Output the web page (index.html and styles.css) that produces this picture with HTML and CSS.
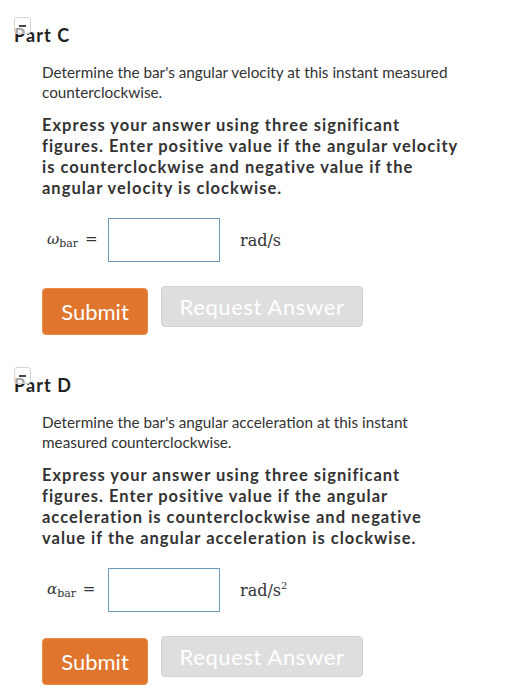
FILE: index.html
```html
<!DOCTYPE html>
<html lang="en">
<head>
    <meta charset="UTF-8">
    <meta name="viewport" content="width=device-width, initial-scale=1.0">
    <title>Part C and D</title>
    <link rel="stylesheet" href="styles.css">
</head>
<body>
    <div class="part">
        <h2 class="part-title"><span class="toggle"></span>Part C</h2>
        <div class="part-body">
            <p class="question">Determine the bar's angular velocity at this instant measured counterclockwise.</p>
            <p class="instructions">Express your answer using three significant figures. Enter positive value if the angular velocity is counterclockwise and negative value if the angular velocity is clockwise.</p>
            <div class="answer-row">
                <span class="math"><i>ω</i><sub>bar</sub> <span class="eq">=</span></span>
                <input class="answer" type="text">
                <span class="unit">rad/s</span>
            </div>
            <div class="button-row">
                <button class="btn submit">Submit</button>
                <button class="btn request" disabled>Request Answer</button>
            </div>
        </div>
    </div>

    <div class="part">
        <h2 class="part-title"><span class="toggle"></span>Part D</h2>
        <div class="part-body">
            <p class="question">Determine the bar's angular acceleration at this instant measured counterclockwise.</p>
            <p class="instructions">Express your answer using three significant figures. Enter positive value if the angular acceleration is counterclockwise and negative value if the angular acceleration is clockwise.</p>
            <div class="answer-row">
                <span class="math"><i>α</i><sub>bar</sub> <span class="eq">=</span></span>
                <input class="answer" type="text">
                <span class="unit">rad/s<sup>2</sup></span>
            </div>
            <div class="button-row">
                <button class="btn submit">Submit</button>
                <button class="btn request" disabled>Request Answer</button>
            </div>
        </div>
    </div>
</body>
</html>
```

FILE: styles.css
```css
* {
    margin: 0;
    padding: 0;
    box-sizing: border-box;
}

body {
    background: #fff;
    color: #333;
    font-family: Lato, 'Open Sans', sans-serif;
}

.part {
    height: 350px;
    padding: 23px 0 0 14px;
}

.part-title {
    position: relative;
    font-size: 18px;
    line-height: 24px;
    font-weight: 700;
    letter-spacing: 1.1px;
    color: #222;
}

/* collapse toggle sits over the heading */
.toggle {
    position: absolute;
    left: 0;
    top: -6px;
    width: 17px;
    height: 17px;
    border: 1px solid #d4d4d4;
    border-radius: 3px;
    background: rgba(255, 255, 255, 0.6);
}

.toggle::after {
    content: '';
    position: absolute;
    left: 4px;
    top: 7px;
    width: 7px;
    height: 2px;
    background: #444;
}

.part-body {
    padding-left: 28px;
    width: 480px;
}

.question {
    margin-top: 15px;
    font-size: 15.3px;
    line-height: 20px;
    width: 420px;
}

.instructions {
    margin-top: 13px;
    font-size: 16.5px;
    line-height: 21px;
    font-weight: 700;
    letter-spacing: 1px;
    width: 421px;
}

.answer-row {
    display: flex;
    align-items: center;
    margin-top: 19px;
    font-family: 'DejaVu Serif', 'Liberation Serif', serif;
}

.math {
    width: 66px;
    padding-left: 5px;
    font-size: 15px;
}

.math sub {
    font-size: 11px;
    vertical-align: -3px;
}

.math .eq {
    margin-left: 2px;
}

.answer {
    width: 112px;
    height: 44px;
    border: 1px solid #6d99b8;
    outline: none;
}

.unit {
    margin-left: 20px;
    font-size: 16px;
}

.unit sup {
    font-size: 10px;
    vertical-align: 7px;
}

.button-row {
    display: flex;
    align-items: flex-start;
    gap: 13px;
    margin-top: 24px;
}

.btn {
    font-family: Lato, 'Open Sans', sans-serif;
    font-size: 22px;
    color: #fff;
    border-radius: 4px;
    cursor: pointer;
}

.submit {
    margin-top: 2px;
    width: 106px;
    height: 47px;
    background: #e0752e;
    border: 1px solid #e98a45;
}

.request {
    width: 202px;
    height: 41px;
    background: #dedede;
    border: 1px solid #d2d2d2;
    letter-spacing: 0.6px;
    cursor: default;
}
```
